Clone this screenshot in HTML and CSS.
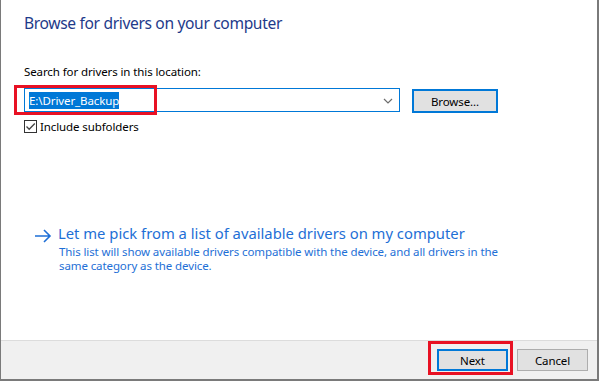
FILE: index.html
```html
<!DOCTYPE html>
<html lang="en">
<head>
    <meta charset="UTF-8">
    <meta name="viewport" content="width=device-width, initial-scale=1.0">
    <title>Browse for drivers on your computer</title>
    <link rel="stylesheet" href="styles.css">
</head>
<body>
    <div class="dialog">
        <div class="content">
            <h1 class="title">Browse for drivers on your computer</h1>

            <label class="field-label" for="path">Search for drivers in this location:</label>
            <div class="path-row">
                <div class="combo">
                    <span class="combo-value"><span class="selected">E:\Driver_Backup</span></span>
                    <svg class="combo-arrow" width="10" height="6" viewBox="0 0 10 6">
                        <path d="M1 1 L5 5 L9 1" fill="none" stroke="#6d6d6d" stroke-width="1.2"/>
                    </svg>
                    <span class="mark mark-path"></span>
                </div>
                <button class="btn btn-focus">Browse...</button>
            </div>

            <div class="check-row">
                <span class="checkbox">
                    <svg width="11" height="11" viewBox="0 0 11 11">
                        <path d="M1.5 5.5 L4.2 8.3 L9.8 2.5" fill="none" stroke="#444" stroke-width="1.3"/>
                    </svg>
                </span>
                <span>Include subfolders</span>
            </div>

            <div class="option">
                <svg class="option-arrow" width="18" height="14" viewBox="0 0 18 14">
                    <path d="M1 7 H16 M10 1 L16 7 L10 13" fill="none" stroke="#1e6fd6" stroke-width="1.6"/>
                </svg>
                <div>
                    <div class="option-title">Let me pick from a list of available drivers on my computer</div>
                    <div class="option-text">This list will show available drivers compatible with the device, and all drivers in the same category as the device.</div>
                </div>
            </div>
        </div>

        <div class="footer">
            <div class="next-wrap">
                <button class="btn btn-focus">Next</button>
                <span class="mark mark-next"></span>
            </div>
            <button class="btn">Cancel</button>
        </div>
    </div>
</body>
</html>
```

FILE: styles.css
```css
html, body { margin: 0; padding: 0; background: #fff; }
body { font-family: "Segoe UI", "Noto Sans", Arial, sans-serif; font-size: 11.5px; letter-spacing: -0.1px; color: #000; }

.dialog { height: 381px; box-sizing: border-box; border-left: 1px solid #7a7a7a; border-right: 2px solid #7a7a7a; border-bottom: 2px solid #7a7a7a; display: flex; flex-direction: column; }
.content { flex: 1; padding: 10px 0 0 23px; }

.title { margin: 0; font-size: 15.6px; font-weight: normal; color: #1e3a8a; line-height: 26px; letter-spacing: -0.35px; }

.field-label { display: block; margin-top: 28px; line-height: 16px; }

.path-row { display: flex; align-items: center; gap: 12px; margin-top: 7px; }
.combo { position: relative; width: 376px; height: 24px; box-sizing: border-box; border: 1px solid #0078d7; display: flex; align-items: center; justify-content: space-between; padding: 0 6px 0 4px; }
.selected { background: #0078d7; color: #fff; padding: 1px 0; }
.combo-arrow { margin-top: 1px; }

.btn { font-family: inherit; font-size: 11.5px; letter-spacing: -0.1px; color: #000; background: #e1e1e1; border: 1px solid #adadad; width: 71px; height: 22px; padding: 0; }
.btn-focus { border: 2px solid #0078d7; }
.path-row .btn { width: 86px; height: 24px; margin-top: 2px; }

.check-row { display: flex; align-items: center; gap: 3px; margin-top: 6px; }
.checkbox { width: 11px; height: 11px; border: 1px solid #333; display: flex; align-items: center; justify-content: center; background: #fff; }

.option { display: flex; gap: 7px; margin-top: 89px; padding-left: 10px; color: #1e6fd6; }
.option-arrow { margin-top: 6px; }
.option-title { font-size: 14.8px; line-height: 20px; letter-spacing: 0; margin-left: -1px; }
.option-text { width: 445px; line-height: 14px; margin-top: 2px; }

.footer { height: 38px; background: #f0f0f0; border-top: 1px solid #dcdcdc; display: flex; align-items: center; justify-content: flex-end; gap: 9px; padding-right: 9px; }
.next-wrap { position: relative; }
.next-wrap .btn { display: block; }

.mark { position: absolute; border: 3px solid #e81123; }
.mark-path { left: -11px; top: -4px; width: 137px; height: 24px; }
.mark-next { left: -9px; top: -8px; width: 79px; height: 28px; }
```
